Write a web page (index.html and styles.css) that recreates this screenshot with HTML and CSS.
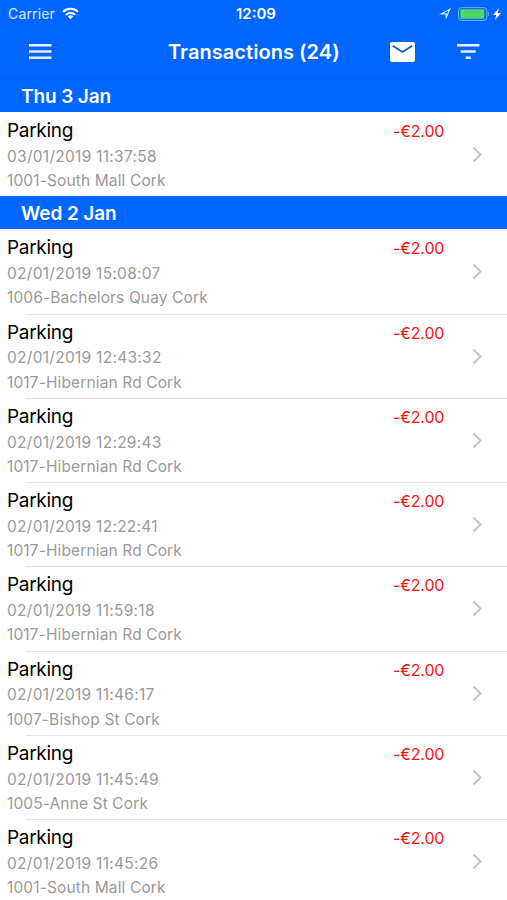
FILE: index.html
```html
<!DOCTYPE html>
<html lang="en">
<head>
<meta charset="utf-8">
<title>Transactions</title>
<link rel="stylesheet" href="styles.css">
</head>
<body>
<header class="top">
  <div class="status">
    <span class="carrier">Carrier</span>
    <svg class="wifi" width="17" height="13" viewBox="0 0 17 13"><path fill="#fff" d="M8.500 12.300 5.800 9.600a3.900 3.900 0 0 1 5.400 0z"/><path fill="none" stroke="#fff" stroke-width="2" d="M3.800 7.900a6.800 6.800 0 0 1 9.400 0M1 4.900a10.800 10.800 0 0 1 15 0"/></svg>
    <span class="clock">12:09</span>
    <svg class="loc" width="12" height="12" viewBox="0 0 12 12"><path fill="#dceaff" fill-rule="evenodd" d="M12 0 6.700 12V6.400H0zM9.200 2.600 4.500 5.200h3.300v2.300z"/></svg>
    <svg class="battery" width="33" height="14" viewBox="0 0 33 14"><rect x=".6" y=".6" width="28.200" height="12.800" rx="3" fill="none" stroke="#78adff" stroke-width="1"/><rect x="2.300" y="2.300" width="24" height="9.400" rx="1" fill="#4cd964"/><path fill="#78adff" d="M30 4.500q2 2.500 0 5z"/></svg>
    <svg class="bolt" width="8" height="12" viewBox="0 0 8 12"><path fill="#fff" d="M6 0 0 7h3.300L2 12l6-7H4.700z"/></svg>
  </div>
  <div class="nav">
    <svg class="menu" width="23" height="16" viewBox="0 0 23 16"><path fill="#e8f1ff" d="M0 0h22.500v2.500H0zM0 6.300h22.500v2.500H0zM0 12.600h22.500v2.500H0z"/></svg>
    <h1>Transactions (24)</h1>
    <svg class="mail" width="25" height="20" viewBox="0 0 25 20"><path fill="#fff" d="M2 0h21a2 2 0 0 1 2 2v16a2 2 0 0 1-2 2H2a2 2 0 0 1-2-2V2a2 2 0 0 1 2-2z"/><path fill="none" stroke="#0d59d0" stroke-width="1.700" d="M2.700 3.700 12.500 10l9.800-6.300"/></svg>
    <svg class="filter" width="23" height="15" viewBox="0 0 23 15"><path fill="#e8f1ff" d="M0 0h22.500v2.500H0zM3.700 6.300h15v2.500h-15zM8.700 12.500h5V15h-5z"/></svg>
  </div>
</header>
<main id="list"></main>
<script src="app.js"></script>
</body>
</html>
```
FILE: styles.css
```css
* { box-sizing: border-box; }
body { margin: 0; width: 507px; height: 900px; overflow: hidden; background: #fff; font-family: Inter, sans-serif; }
svg { display: block; flex: none; }
.top { height: 79px; background: #0066ff; color: #fff; border-bottom: 1px solid #0060f2; }
.status { height: 27px; display: grid; grid-template-columns: 54px 174px 1fr 20px 37px 15px; align-items: center; padding-left: 8px; font-size: 14px; }
.carrier { color: #d9e8ff; letter-spacing: .15px; }
.clock { font-size: 15px; font-weight: 600; letter-spacing: 0; }
.loc { margin-left: 4px; }
.battery { margin-left: 3px; }
.bolt { margin-left: 1px; }
.nav { height: 50px; display: grid; grid-template-columns: 139px 222px 67px 1fr; align-items: center; padding-left: 29px; }
.nav h1 { margin: 0; font-size: 20px; line-height: 26px; font-weight: 600; letter-spacing: .05px; white-space: nowrap; }
.mail { margin-left: -.5px; }
.menu, .filter { margin-top: -1px; }
.day { height: 33px; margin: 0; padding-left: 21px; background: #0066ff; color: #fff; font-size: 19px; line-height: 35px; font-weight: 600; letter-spacing: -.1px; }
.row { position: relative; height: 84.3px; display: grid; grid-template-columns: 386px 84px 1fr; padding: 6px 0 0 7px; }
.row + .row::before { content: ""; position: absolute; top: 0; left: 26px; right: 0; height: 1px; background: #e4e4e6; }
.row p { margin: 0; white-space: nowrap; }
.row .name { font-size: 19px; line-height: 25px; color: #000; letter-spacing: -.3px; margin-bottom: 1.700px; }
.meta { font-size: 15.500px; line-height: 24.300px; color: #999; letter-spacing: .13px; }
.time { letter-spacing: .28px; }
.row .amount { font-size: 16px; line-height: 26px; color: #f51414; letter-spacing: -.15px; }
.chevron { margin-top: 28px; margin-left: -5px; }
```
FILE: app.js
```js
const days = [
  ["Thu 3 Jan", [["03/01/2019 11:37:58", "1001-South Mall Cork"]]],
  ["Wed 2 Jan", [
    ["02/01/2019 15:08:07", "1006-Bachelors Quay Cork"],
    ["02/01/2019 12:43:32", "1017-Hibernian Rd Cork"],
    ["02/01/2019 12:29:43", "1017-Hibernian Rd Cork"],
    ["02/01/2019 12:22:41", "1017-Hibernian Rd Cork"],
    ["02/01/2019 11:59:18", "1017-Hibernian Rd Cork"],
    ["02/01/2019 11:46:17", "1007-Bishop St Cork"],
    ["02/01/2019 11:45:49", "1005-Anne St Cork"],
    ["02/01/2019 11:45:26", "1001-South Mall Cork"]
  ]]
];
const row = ([time, place]) => `<article class="row">
  <div><p class="name">Parking</p><p class="meta time">${time}</p><p class="meta">${place}</p></div>
  <p class="amount">-€2.00</p>
  <svg class="chevron" width="11" height="17" viewBox="0 0 11 17"><path fill="none" stroke="#c4c4c8" stroke-width="2" d="m1.500 1.500 7 7-7 7"/></svg>
</article>`;
document.getElementById("list").innerHTML = days.map(([day, rows]) =>
  `<section><h2 class="day">${day}</h2>${rows.map(row).join("")}</section>`).join("");
```
